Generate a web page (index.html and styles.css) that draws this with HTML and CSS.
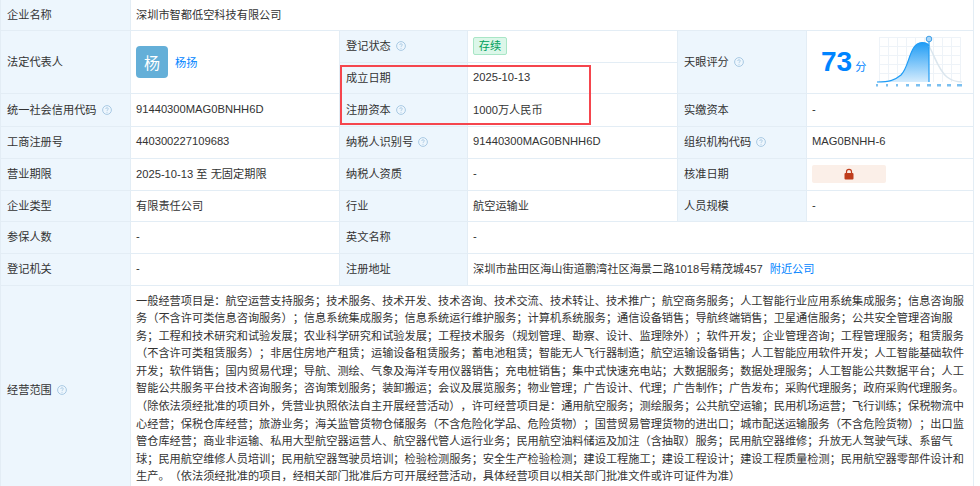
FILE: index.html
```html
<!DOCTYPE html>
<html lang="zh-CN">
<head>
<meta charset="utf-8">
<title>企业信息</title>
<link rel="stylesheet" href="styles.css">
</head>
<body>
<svg class="defs" width="0" height="0" aria-hidden="true"><defs>
<symbol id="help" viewBox="0 0 10 10"><circle cx="5" cy="5" r="4.4" fill="none" stroke="#a9c9e3" stroke-width="1"/><path d="M3.700 4c0-.8.6-1.300 1.300-1.300s1.300.5 1.300 1.200c0 .9-1.300 1-1.300 2" fill="none" stroke="#a9c9e3" stroke-width=".9"/><circle cx="5" cy="7.200" r=".55" fill="#a9c9e3"/></symbol>
</defs></svg>
<div class="sheet">
<table class="info">
<colgroup><col class="c1"><col class="c2"><col class="c3"><col class="c4"><col class="c5"><col class="c6"></colgroup>
<tbody>
<tr class="r30"><th>企业名称</th><td colspan="5">深圳市智都低空科技有限公司</td></tr>
<tr class="r32">
  <th rowspan="2">法定代表人</th>
  <td rowspan="2" class="boxed"><div class="person"><span class="avatar">杨</span><a class="link">杨扬</a></div></td>
  <th>登记状态 <svg class="help"><use href="#help"/></svg></th>
  <td class="boxed"><div class="tag">存续</div></td>
  <th rowspan="2">天眼评分 <svg class="help"><use href="#help"/></svg></th>
  <td rowspan="2" class="scorecell">
    <div class="score">
      <div class="value"><span class="num">73</span><span class="unit">分</span></div>
      <svg class="chart" width="90" height="54" viewBox="0 0 90 54">
        <defs><linearGradient id="fill" x1="0" y1="0" x2="0" y2="1"><stop offset="0" stop-color="#1f9cf5"/><stop offset="1" stop-color="#d5ecfd"/></linearGradient></defs>
        <g stroke="#eef3f8" stroke-width="1" fill="none">
          <path d="M4.500 4V49M13.500 4V49M22.500 4V49M31.500 4V49M40.500 4V49M49.500 4V49M58.500 4V49M67.500 4V49M76.500 4V49M85.500 4V49"/>
          <path d="M4 4.500H86M4 13.500H86M4 22.500H86M4 31.500H86M4 40.500H86"/>
        </g>
        <path d="M2 49C15 49 20 47 26 42C35 33 34 10 47 9.500C51 9.500 53 10 54 13V49Z" fill="url(#fill)"/>
        <path d="M2 49C15 49 20 47 26 42C35 33 34 10 47 9.500C51 9.500 53 10 54 13" fill="none" stroke="#1f9cf5" stroke-width="1.200"/>
        <path d="M54 13C60 24 64 38 72 44C76 47 80 49 87 49" fill="none" stroke="#dbe6ee" stroke-width="1.500"/>
        <path d="M54 7V49" stroke="#1f9cf5" stroke-width="1.200"/>
        <circle cx="54" cy="6" r="2.800" fill="#a9d6f8" stroke="#3f9fe8" stroke-width="1"/>
        <g fill="#7cc0f0">
          <rect x="1" y="51" width="2" height="2.500"/><rect x="11" y="51" width="2" height="2.500"/><rect x="21" y="51" width="2" height="2.500"/><rect x="31" y="51" width="3" height="2.500"/><rect x="41" y="51" width="4" height="2.500"/><rect x="52" y="51" width="4" height="2.500"/><rect x="62" y="51" width="4" height="2.500"/><rect x="72" y="51" width="4" height="2.500"/><rect x="82" y="51" width="5" height="2.500"/>
        </g>
      </svg>
    </div>
  </td>
</tr>
<tr class="r31"><th>成立日期</th><td>2025-10-13</td></tr>
<tr class="r33">
  <th>统一社会信用代码 <svg class="help"><use href="#help"/></svg></th><td>91440300MAG0BNHH6D</td>
  <th>注册资本 <svg class="help"><use href="#help"/></svg></th><td>1000万人民币</td>
  <th>实缴资本</th><td>-</td>
</tr>
<tr class="r32">
  <th>工商注册号</th><td>440300227109683</td>
  <th>纳税人识别号 <svg class="help"><use href="#help"/></svg></th><td>91440300MAG0BNHH6D</td>
  <th>组织机构代码 <svg class="help"><use href="#help"/></svg></th><td>MAG0BNHH-6</td>
</tr>
<tr class="r32">
  <th>营业期限</th><td>2025-10-13 至 无固定期限</td>
  <th>纳税人资质</th><td>-</td>
  <th>核准日期</th>
  <td class="boxed"><span class="locked"><svg width="12" height="12" viewBox="0 0 12 12"><path d="M3.500 5.500V3.800a2.500 2.500 0 0 1 5 0V5.500" fill="none" stroke="#bf3d1c" stroke-width="1.200"/><rect x="1.500" y="5" width="9" height="6.500" rx="1" fill="#bf3d1c"/></svg></span></td>
</tr>
<tr class="r31">
  <th>企业类型</th><td>有限责任公司</td>
  <th>行业</th><td>航空运输业</td>
  <th>人员规模</th><td>-</td>
</tr>
<tr class="r32"><th>参保人数</th><td>-</td><th>英文名称</th><td colspan="3">-</td></tr>
<tr class="r32"><th>登记机关</th><td>-</td><th>注册地址</th><td colspan="3">深圳市盐田区海山街道鹏湾社区海景二路1018号精茂城457<a class="link near">附近公司</a></td></tr>
<tr>
  <th>经营范围 <svg class="help"><use href="#help"/></svg></th>
  <td colspan="5" class="scope">一般经营项目是：航空运营支持服务；技术服务、技术开发、技术咨询、技术交流、技术转让、技术推广；航空商务服务；人工智能行业应用系统集成服务；信息咨询服务（不含许可类信息咨询服务）；信息系统集成服务；信息系统运行维护服务；计算机系统服务；通信设备销售；导航终端销售；卫星通信服务；公共安全管理咨询服务；工程和技术研究和试验发展；农业科学研究和试验发展；工程技术服务（规划管理、勘察、设计、监理除外）；软件开发；企业管理咨询；工程管理服务；租赁服务（不含许可类租赁服务）；非居住房地产租赁；运输设备租赁服务；蓄电池租赁；智能无人飞行器制造；航空运输设备销售；人工智能应用软件开发；人工智能基础软件开发；软件销售；国内贸易代理；导航、测绘、气象及海洋专用仪器销售；充电桩销售；集中式快速充电站；大数据服务；数据处理服务；人工智能公共数据平台；人工智能公共服务平台技术咨询服务；咨询策划服务；装卸搬运；会议及展览服务；物业管理；广告设计、代理；广告制作；广告发布；采购代理服务；政府采购代理服务。（除依法须经批准的项目外，凭营业执照依法自主开展经营活动），许可经营项目是：通用航空服务；测绘服务；公共航空运输；民用机场运营；飞行训练；保税物流中心经营；保税仓库经营；旅游业务；海关监管货物仓储服务（不含危险化学品、危险货物）；国营贸易管理货物的进出口；城市配送运输服务（不含危险货物）；出口监管仓库经营；商业非运输、私用大型航空器运营人、航空器代管人运行业务；民用航空油料储运及加注（含抽取）服务；民用航空器维修；升放无人驾驶气球、系留气球；民用航空维修人员培训；民用航空器驾驶员培训；检验检测服务；安全生产检验检测；建设工程施工；建设工程设计；建设工程质量检测；民用航空器零部件设计和生产。（依法须经批准的项目，经相关部门批准后方可开展经营活动，具体经营项目以相关部门批准文件或许可证件为准）</td>
</tr>
</tbody>
</table>
<div class="highlight"></div>
</div>
</body>
</html>
```

FILE: styles.css
```css
html, body { margin: 0; padding: 0; background: #fff; }
body { font-family: "Liberation Sans", "Noto Sans CJK SC", sans-serif; font-size: 11.2px; color: #333; overflow: hidden; height: 486px; text-spacing-trim: space-all; }
.defs { position: absolute; }
.sheet { position: relative; width: 973px; }
.info { border-collapse: collapse; table-layout: fixed; width: 973px; }
.c1 { width: 130px; } .c2 { width: 209px; } .c3 { width: 128px; } .c4 { width: 210px; } .c5 { width: 129px; } .c6 { width: 167px; }
th, td { border: 1px solid #e3edf5; padding: 0 6px 2px 5px; font-weight: 400; text-align: left; vertical-align: middle; box-sizing: border-box; }
th { padding-left: 6px; background: #edf6fd; }
.info tr:first-child th, .info tr:first-child td { border-top: 0; }
.info td.boxed { padding-bottom: 0; }
.r30 { height: 30px; } .r31 { height: 31px; } .r32 { height: 32px; } .r33 { height: 33px; }
.help { width: 10px; height: 10px; margin-left: 2px; vertical-align: -1px; }
.person { display: flex; align-items: center; gap: 7px; }
.avatar { width: 32px; height: 32px; border-radius: 4px; background: #64afd8; color: #fff; font-size: 16px; display: flex; align-items: center; justify-content: center; }
.link { color: #0084ff; }
.near { margin-left: 7px; }
.tag { width: 34px; height: 18px; line-height: 16px; box-sizing: border-box; border: 1px solid #a9e6c6; border-radius: 2px; background: #dcf7e9; color: #00a05c; text-align: center; }
.scorecell { padding: 0 0 0 14px; }
.score { display: flex; align-items: center; }
.value { display: flex; align-items: baseline; }
.num { font-size: 28px; font-weight: 700; color: #0084ff; line-height: 32px; }
.unit { font-size: 11.2px; color: #0084ff; margin-left: 3px; }
.chart { margin: -4px 0 0 9px; }
.locked { display: flex; align-items: center; justify-content: center; width: 74px; height: 18px; background: #fbefe8; border-radius: 2px; }
.scope { line-height: 17.6px; padding: 7px 6px 8px 5px; vertical-align: top; }
.highlight { position: absolute; left: 340px; top: 65px; width: 251px; height: 60px; box-sizing: border-box; border: 2px solid #f5454d; }
```
